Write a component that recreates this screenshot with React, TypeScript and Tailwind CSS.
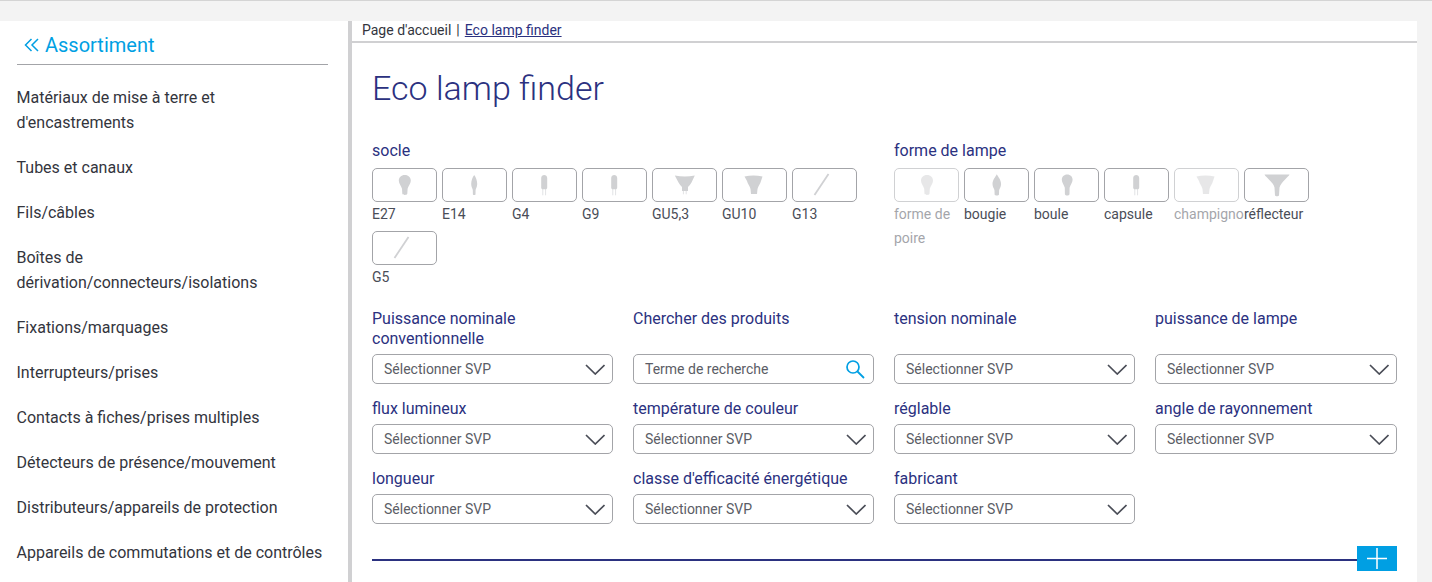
import React from "react";

const SIDE = [
  "Matériaux de mise à terre et d'encastrements",
  "Tubes et canaux",
  "Fils/câbles",
  "Boîtes de dérivation/connecteurs/isolations",
  "Fixations/marquages",
  "Interrupteurs/prises",
  "Contacts à fiches/prises multiples",
  "Détecteurs de présence/mouvement",
  "Distributeurs/appareils de protection",
  "Appareils de commutations et de contrôles",
];

type Kind = "bulb" | "candle" | "capsule" | "mr" | "gu" | "tube" | "pear" | "bougie" | "boule" | "reflector";

function Glyph({ kind }: { kind: Kind }) {
  const c = "#d0d1d3";
  const pin = "#e2e3e5";
  const inner: Record<Kind, React.ReactNode> = {
    bulb: <path d="M19.800 3c-3.700 0-6 2.500-6 5.700 0 3 2.500 5 3.200 8l.3 5c.4 1.600 4.600 1.600 5 0l.3-5c.7-3 3.200-5 3.200-8 0-3.200-2.300-5.700-6-5.700z" fill={c} />,
    pear: <path d="M20 3c-3.700 0-6 2.500-6 5.700 0 3 2.500 5 3.200 8l.3 5c.4 1.600 4.600 1.600 5 0l.3-5c.7-3 3.200-5 3.200-8 0-3.200-2.300-5.700-6-5.700z" fill={c} />,
    boule: <path d="M20.200 2.500c-3.300 0-5.400 2.300-5.400 5.300 0 3 2.300 5 3 8l.1 6.500c.4 1.600 4.200 1.600 4.600 0l.1-6.500c.7-3 3-5 3-8 0-3-2.100-5.300-5.400-5.300z" fill={c} />,
    candle: <path d="M19.200 3c-1.600 2-3 5.500-3 9 0 3 1.300 4.500 1.600 6l.1 4.500c.3.700 2.300.700 2.600 0l.1-4.500c.3-1.500 1.600-3 1.600-6 0-3.500-1.400-7-3-9z" fill={c} />,
    bougie: <path d="M19.800 2.300c-1.300 2.700-4.300 5.700-4.300 9.700 0 3 1.700 4.500 2 6.500l.1 4c.4 1.400 4 1.400 4.400 0l.1-4c.3-2 2-3.500 2-6.500 0-4-3-7-4.300-9.700z" fill={c} />,
    capsule: (
      <g>
        <path d="M17.800 17v6.300M20.600 17v6.300" stroke={pin} strokeWidth="1" fill="none" />
        <path d="M16.200 6c0-4 6-4 6 0v9.500c0 1.200-.6 1.800-1.600 1.800h-2.800c-1 0-1.600-.6-1.600-1.800z" fill={c} />
      </g>
    ),
    mr: (
      <g>
        <path d="M18.400 18v4.300M21.200 18v4.300" stroke={pin} strokeWidth="1" fill="none" />
        <path d="M9.800 3.500Q20 5.500 29.800 3.500L26.500 10.500q-2 3.500-3.500 4.500V19h-6v-4q-1.500-1-3.500-4.500z" fill={c} />
      </g>
    ),
    gu: <path d="M9.500 4.500Q18.500 2.500 27.500 4.500L26 9c-.5 3-3 5-3.500 8l-.5 5h-6l-.5-5c-.5-3-3-5-3.500-8z" fill={c} />,
    reflector: <path d="M7.500 2.500h25c-.5 2-8.500 7.500-10 13l-.5 8c-.5 1-3.500 1-4 0l-.5-8C16 10 8 4.500 7.500 2.500z" fill={c} />,
    tube: <path d="M23.500 2 9.500 23" stroke={c} strokeWidth="1.800" fill="none" />,
  };
  return (
    <svg width="40" height="28" viewBox="0 -1 40 28" className="block">
      {inner[kind]}
    </svg>
  );
}

function Tile({ label, kind, dim }: { label: string; kind: Kind; dim?: boolean }) {
  return (
    <div className={`w-[70px] mb-[4px] ${dim ? "opacity-50" : ""}`}>
      <div className="w-[65px] h-[34px] rounded-[5px] border border-[#a3a4a8] bg-white flex items-center justify-center">
        <Glyph kind={kind} />
      </div>
      <div className="w-[70px] overflow-hidden text-[14px] leading-[24px] pb-[1px] text-[#4a4d57]">{label}</div>
    </div>
  );
}

function Chevron() {
  return (
    <svg width="20" height="12" viewBox="0 0 20 12" className="shrink-0">
      <path d="M1 2 10.250 11 19.500 2" fill="none" stroke="#4a4d57" strokeWidth="1.700" />
    </svg>
  );
}

function Select({ value = "Sélectionner SVP", search }: { value?: string; search?: boolean }) {
  return (
    <div className={`h-[30px] rounded-[5px] border border-[#a3a4a8] bg-white flex items-center justify-between pl-[11px] ${search ? "pr-[8px]" : "pr-[7px]"}`}>
      <span className="text-[14px] text-[#5b5d66]">{value}</span>
      {search ? (
        <svg width="20" height="20" viewBox="0 0 20 20" className="shrink-0">
          <circle cx="8" cy="8" r="6" fill="none" stroke="#009fe3" strokeWidth="1.700" />
          <path d="M12.500 12.500 19 19" fill="none" stroke="#009fe3" strokeWidth="1.800" />
        </svg>
      ) : (
        <Chevron />
      )}
    </div>
  );
}

function Field({ label, search, value, h = "" }: { label: string; search?: boolean; value?: string; h?: string }) {
  return (
    <div className="flex flex-col justify-end">
      <div className={`text-[16px] leading-[20px] text-[#2b3180] mb-[5px] ${h}`}>{label}</div>
      <Select search={search} value={value} />
    </div>
  );
}

export default function App() {
  return (
    <div className="w-[1432px] h-[582px] overflow-hidden bg-[#f3f3f3] border-t border-[#d4d4d4] font-['Roboto',sans-serif]">
      <div className="flex h-[561px] mt-[20px] w-[1417px]">
        <aside className="w-[352px] shrink-0 bg-white border-r-4 border-[#d0d0d2] pl-[17px] pr-[20px]">
          <div className="h-[44px] border-b border-[#a3a4a8] flex items-center pl-[7px] text-[#009fe3] text-[20px] pt-[4px]">
            <svg width="16" height="14" viewBox="0 0 16 14" className="mr-[5px] mt-[1px]">
              <path d="M7.500 1 1.500 7l6 6M14 1 8 7l6 6" fill="none" stroke="#009fe3" strokeWidth="1.500" />
            </svg>
            Assortiment
          </div>
          <nav className="pt-[20px] flex flex-col gap-[20px] ml-[-0.5px] pr-[2px]">
            {SIDE.map((s) => (
              <div key={s} className="text-[16px] leading-[25px] text-[#33353d]">
                {s}
              </div>
            ))}
          </nav>
        </aside>
        <main className="flex-1 bg-white">
          <div className="h-[22px] border-b-2 border-[#d0d0d2] pl-[10px] text-[14px] leading-[19px] text-[#33353d]">
            Page d'accueil<span className="mx-[5px]">|</span>
            <span className="underline text-[#2b3180]">Eco lamp finder</span>
          </div>
          <div className="px-[20px]">
            <h1 className="text-[34px] leading-[44px] font-light text-[#2b3180] pt-[23px]">Eco lamp finder</h1>
            <div className="grid grid-cols-[502px_1fr] gap-x-[20px] mt-[31px] h-[168px]">
              <div>
                <div className="text-[16px] leading-[20px] text-[#2b3180] mb-[7px]">socle</div>
                <div className="flex flex-wrap w-[502px]">
                  <Tile label="E27" kind="bulb" />
                  <Tile label="E14" kind="candle" />
                  <Tile label="G4" kind="capsule" />
                  <Tile label="G9" kind="capsule" />
                  <Tile label="GU5,3" kind="mr" />
                  <Tile label="GU10" kind="gu" />
                  <Tile label="G13" kind="tube" />
                  <Tile label="G5" kind="tube" />
                </div>
              </div>
              <div>
                <div className="text-[16px] leading-[20px] text-[#2b3180] mb-[7px]">forme de lampe</div>
                <div className="flex">
                  <Tile label="forme de poire" kind="pear" dim />
                  <Tile label="bougie" kind="bougie" />
                  <Tile label="boule" kind="boule" />
                  <Tile label="capsule" kind="capsule" />
                  <Tile label="champignon" kind="gu" dim />
                  <Tile label="réflecteur" kind="reflector" />
                </div>
              </div>
            </div>
            <div className="grid grid-cols-[241px_241px_241px_242px] gap-x-[20px] gap-y-[15px] items-end">
              <Field label="Puissance nominale conventionnelle" />
              <Field label="Chercher des produits" search value="Terme de recherche" h="h-[40px]" />
              <Field label="tension nominale" h="h-[40px]" />
              <Field label="puissance de lampe" h="h-[40px]" />
              <Field label="flux lumineux" />
              <Field label="température de couleur" />
              <Field label="réglable" />
              <Field label="angle de rayonnement" />
              <Field label="longueur" />
              <Field label="classe d'efficacité énergétique" />
              <Field label="fabricant" />
            </div>
            <div className="flex items-start mt-[22px]">
              <div className="flex-1 h-[2px] mt-[13px] bg-[#2b3180]" />
              <div className="w-[40px] h-[25px] bg-[#009fe3] flex items-center justify-center">
                <svg width="20" height="21" viewBox="0 0 20 21">
                  <path d="M10 0v21M0 10.500h20" stroke="#fff" strokeWidth="1.500" fill="none" />
                </svg>
              </div>
            </div>
          </div>
        </main>
      </div>
    </div>
  );
}
